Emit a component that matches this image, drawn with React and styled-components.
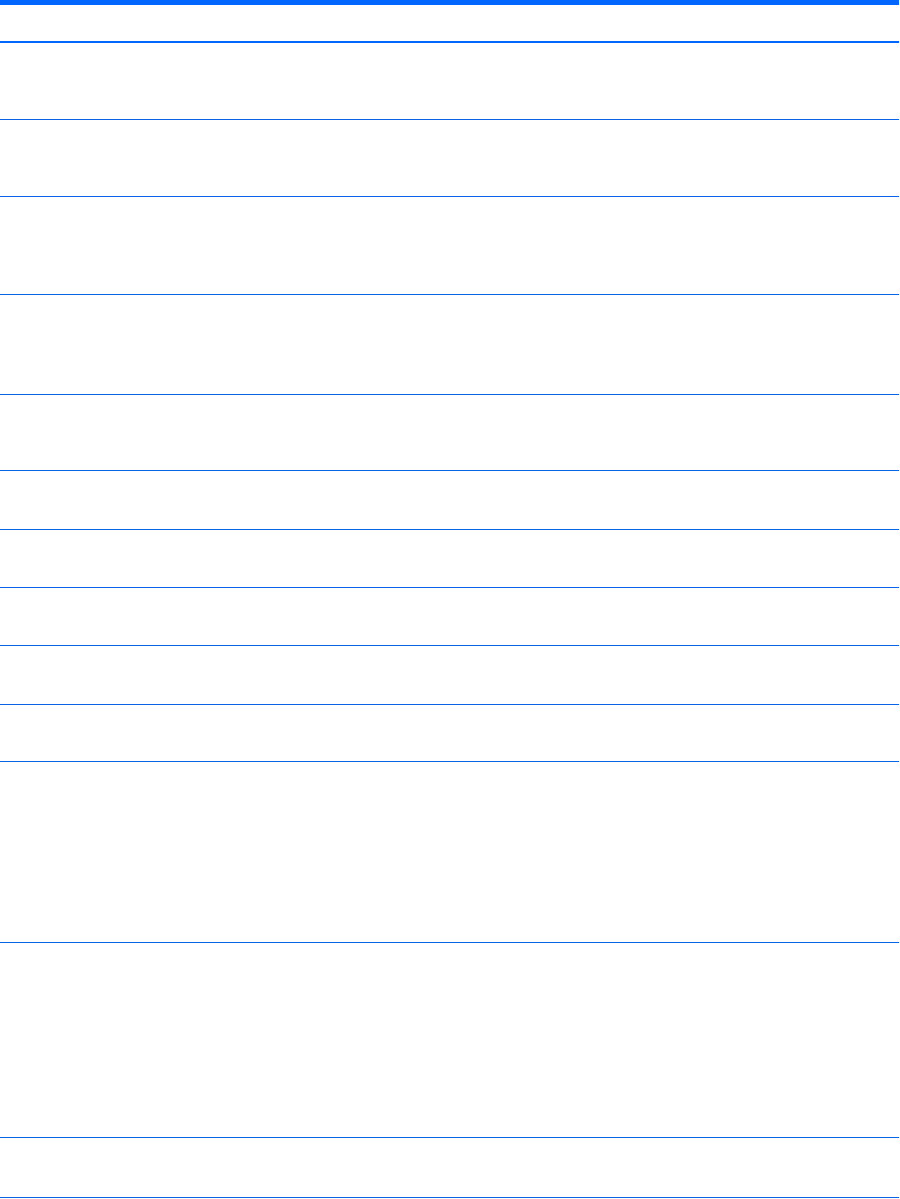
import React from 'react';
import styled, { createGlobalStyle } from 'styled-components';

const GlobalStyle = createGlobalStyle`
  html, body {
    margin: 0;
    padding: 0;
    background: #ffffff;
    font-family: "Liberation Sans", Arial, sans-serif;
  }
`;

const Table = styled.div`
  width: 899px;
  border-top: 5px solid #0066ff;
  display: flex;
  flex-direction: column;
`;

const HeaderRow = styled.div`
  height: 36px;
  border-bottom: 2px solid #0066ff;
  display: flex;
`;

const Row = styled.div`
  box-sizing: border-box;
  height: ${(props) => props.h}px;
  border-bottom: 1px solid #0a63e6;
  display: flex;
`;

const Cell = styled.div`
  flex: 1;
  padding: 6px 8px;
  font-size: 13px;
  color: #000;
`;

const rowHeights = [77, 77, 98, 100, 76, 59, 58, 58, 59, 57, 181, 195, 60];

function App() {
  return (
    <>
      <GlobalStyle />
      <Table>
        <HeaderRow>
          <Cell />
        </HeaderRow>
        {rowHeights.map((h, i) => (
          <Row key={i} h={h}>
            <Cell />
          </Row>
        ))}
      </Table>
    </>
  );
}

export default App;
